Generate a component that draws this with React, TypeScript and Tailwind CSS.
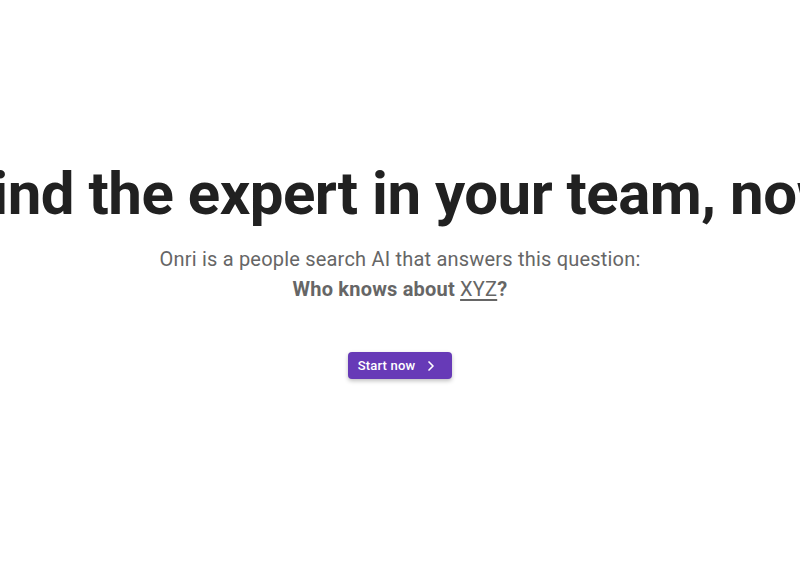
import { ChevronRight } from "lucide-react";

export default function App() {
  return (
    <div className="w-full h-[576px] bg-white overflow-hidden font-['Roboto',sans-serif]">
      <div className="flex flex-col items-center pt-[158px]">
        <div className="w-full flex justify-center">
          <h1 className="whitespace-nowrap text-[60px] leading-[72px] font-bold text-[#212121] tracking-[-0.5px]">
            Find the expert in your team, now
          </h1>
        </div>
        <p className="mt-[14px] text-[20px] leading-[30px] text-[#666666] text-center tracking-[0.2px]">
          Onri is a people search AI that answers this question:
          <br />
          <span className="font-bold">
            Who knows about <span className="font-normal underline underline-offset-[3px]">XYZ</span>?
          </span>
        </p>
        <button className="mt-[48px] flex items-center gap-[8px] h-[27px] pl-[10px] pr-[13px] rounded-[4px] bg-[#673ab7] text-white text-[13px] font-medium tracking-[0.2px] shadow-[0_2px_4px_rgba(0,0,0,0.25)]">
          Start now
          <ChevronRight size={16} strokeWidth={2.5} />
        </button>
      </div>
    </div>
  );
}
